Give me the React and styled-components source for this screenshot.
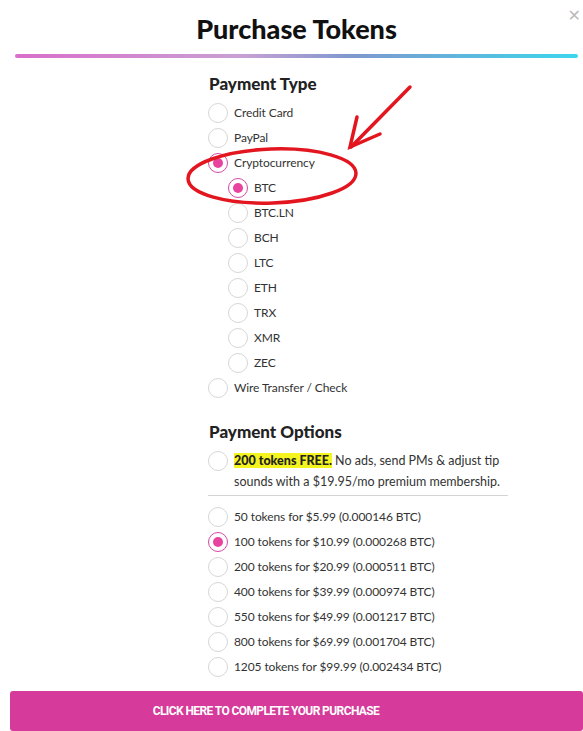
import React from 'react';
import styled, { createGlobalStyle } from 'styled-components';

const GlobalStyle = createGlobalStyle`
  body {
    margin: 0;
    background: #fff;
    font-family: Lato, 'Open Sans', sans-serif;
  }
`;

const Modal = styled.div`
  position: relative;
  width: 583px;
  height: 731px;
  overflow: hidden;
  background: #fff;
`;

const Header = styled.div`
  padding-top: 13px;
  text-align: center;
  padding-left: 10px;
`;

const Title = styled.h1`
  margin: 0;
  font-family: Lato, sans-serif;
  font-weight: 900;
  font-size: 27px;
  line-height: 32px;
  color: #111;
`;

const Close = styled.button`
  position: absolute;
  top: 6px;
  right: 0;
  border: none;
  background: none;
  padding: 0 2px;
  font-family: 'DejaVu Sans', sans-serif;
  font-size: 16px;
  color: #bbb;
  cursor: pointer;
`;

const GradientBar = styled.div`
  height: 4px;
  margin: 9px 5px 0 15px;
  border-radius: 2px;
  background: linear-gradient(90deg, #da6ec9 0%, #c8a0d4 40%, #7e98cf 60%, #3bd7ec 100%);
`;

const Form = styled.div`
  padding-left: 208px;
  padding-top: 16px;
`;

const SectionTitle = styled.h2`
  margin: 0 0 6px 1px;
  font-family: Lato, sans-serif;
  font-weight: 900;
  font-size: 17px;
  line-height: 20px;
  color: #222;
`;

const Row = styled.label`
  display: flex;
  align-items: center;
  height: 25px;
  padding-left: ${({ level }) => (level ? 20 : 0)}px;
  font-size: 12px;
  letter-spacing: -0.1px;
  color: #333;
`;

const Radio = styled.span`
  box-sizing: border-box;
  flex: none;
  width: 20px;
  height: 20px;
  margin-right: 6px;
  border-radius: 50%;
  border: 1px solid ${({ checked }) => (checked ? '#d24aa6' : '#d6d6d6')};
  display: flex;
  align-items: center;
  justify-content: center;
  &::after {
    content: '';
    display: ${({ checked }) => (checked ? 'block' : 'none')};
    width: 10px;
    height: 10px;
    border-radius: 50%;
    background: #e8449f;
  }
`;

const Options = styled.div`
  margin-top: 22px;
`;

const PromoRow = styled.label`
  display: flex;
  align-items: flex-start;
  width: 300px;
  padding-top: 2px;
  padding-bottom: 3px;
  border-bottom: 1px solid #d4d4d4;
  margin-bottom: 8px;
  font-size: 12.5px;
  line-height: 21px;
  color: #333;
  ${Radio} {
    margin-top: 1px;
    margin-right: 6px;
  }
`;

const Highlight = styled.strong`
  background: #f4f41e;
  color: #222;
  font-weight: 900;
`;

const Button = styled.button`
  display: block;
  box-sizing: border-box;
  width: 573px;
  height: 40px;
  margin: 12px 0 0 10px;
  padding: 0 61px 0 0;
  border: none;
  border-radius: 3px;
  background: #d63a9a;
  color: #fff;
  font-family: Roboto, sans-serif;
  font-weight: 700;
  font-size: 12px;
  letter-spacing: -0.6px;
  text-transform: uppercase;
  cursor: pointer;
`;

const Annotation = styled.svg`
  position: absolute;
  left: 0;
  top: 0;
  pointer-events: none;
`;

const cryptos = ['BTC', 'BTC.LN', 'BCH', 'LTC', 'ETH', 'TRX', 'XMR', 'ZEC'];

const packs = [
  ['50', '5.99', '0.000146'],
  ['100', '10.99', '0.000268'],
  ['200', '20.99', '0.000511'],
  ['400', '39.99', '0.000974'],
  ['550', '49.99', '0.001217'],
  ['800', '69.99', '0.001704'],
  ['1205', '99.99', '0.002434'],
];

const Option = ({ level, checked, children }) => (
  <Row level={level}>
    <Radio checked={checked} />
    {children}
  </Row>
);

export default function App() {
  return (
    <>
      <GlobalStyle />
      <Modal>
        <Header>
          <Title>Purchase Tokens</Title>
          <Close aria-label="close">✕</Close>
        </Header>
        <GradientBar />
        <Form>
          <SectionTitle>Payment Type</SectionTitle>
          <Option>Credit Card</Option>
          <Option>PayPal</Option>
          <Option checked>Cryptocurrency</Option>
          {cryptos.map((c) => (
            <Option key={c} level={1} checked={c === 'BTC'}>
              {c}
            </Option>
          ))}
          <Option>Wire Transfer / Check</Option>
          <Options>
            <SectionTitle>Payment Options</SectionTitle>
            <PromoRow>
              <Radio />
              <span>
                <Highlight>200 tokens FREE.</Highlight> No ads, send PMs &amp; adjust tip sounds with a $19.95/mo
                premium membership.
              </span>
            </PromoRow>
            {packs.map(([t, usd, btc]) => (
              <Option key={t} checked={t === '100'}>
                {t} tokens for ${usd} ({btc} BTC)
              </Option>
            ))}
          </Options>
        </Form>
        <Button>Click here to complete your purchase</Button>
        <Annotation width="583" height="731">
          <g fill="none" stroke="#e3161f" strokeWidth="3.5" strokeLinecap="round">
            <ellipse cx="272" cy="176" rx="84" ry="27" transform="rotate(-2 272 176)" />
            <path d="M410 87 L351 147" />
            <path d="M357 117 L350 147 L380 134" />
          </g>
        </Annotation>
      </Modal>
    </>
  );
}
